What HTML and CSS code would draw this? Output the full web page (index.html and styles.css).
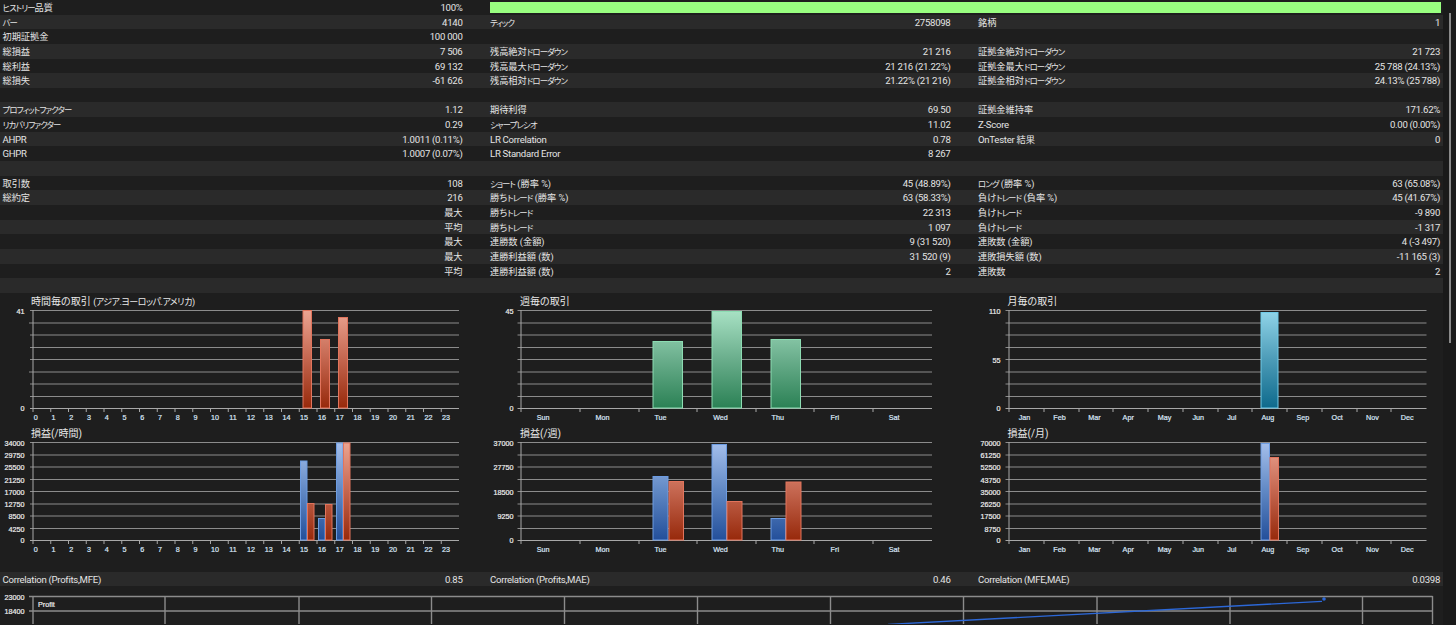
FILE: index.html
```html
<!DOCTYPE html>
<html lang="ja">
<head>
<meta charset="utf-8">
<title>バックテストレポート</title>
<link rel="stylesheet" href="styles.css">
</head>
<body>
<svg class="defs" width="0" height="0" aria-hidden="true">
  <defs>
    <linearGradient id="redA" gradientUnits="userSpaceOnUse" x1="0" y1="310" x2="0" y2="408"><stop offset="0" stop-color="#eca592"/><stop offset="0.5" stop-color="#c4664f"/><stop offset="1" stop-color="#97290b"/></linearGradient>
    <linearGradient id="redB" gradientUnits="userSpaceOnUse" x1="0" y1="442" x2="0" y2="540"><stop offset="0" stop-color="#eca592"/><stop offset="0.5" stop-color="#c4664f"/><stop offset="1" stop-color="#97290b"/></linearGradient>
    <linearGradient id="blueB" gradientUnits="userSpaceOnUse" x1="0" y1="442" x2="0" y2="540"><stop offset="0" stop-color="#a6c0ec"/><stop offset="0.5" stop-color="#6088c4"/><stop offset="1" stop-color="#234f9a"/></linearGradient>
    <linearGradient id="greenA" gradientUnits="userSpaceOnUse" x1="0" y1="310" x2="0" y2="408"><stop offset="0" stop-color="#a9e2c5"/><stop offset="0.5" stop-color="#6aae8c"/><stop offset="1" stop-color="#2b8155"/></linearGradient>
    <linearGradient id="cyanA" gradientUnits="userSpaceOnUse" x1="0" y1="310" x2="0" y2="408"><stop offset="0" stop-color="#93d6ea"/><stop offset="0.5" stop-color="#4d9cb8"/><stop offset="1" stop-color="#0e6a8c"/></linearGradient>
  </defs>
</svg>
<div class="page">
  <main class="content">
    <section class="stats">
      <div class="row"><div class="cell"><span class="ja"><i class="k">ヒストリー</i>品質</span><span>100%</span></div><div class="barcell"><div class="quality"></div></div></div>
      <div class="row"><div class="cell"><span class="ja"><i class="k">バー</i></span><span>4140</span></div><div class="cell"><span class="ja"><i class="k">ティック</i></span><span>2758098</span></div><div class="cell"><span class="ja">銘柄</span><span>1</span></div></div>
      <div class="row"><div class="cell"><span class="ja">初期証拠金</span><span>100 000</span></div></div>
      <div class="row"><div class="cell"><span class="ja">総損益</span><span>7 506</span></div><div class="cell"><span class="ja">残高絶対<i class="k">ドローダウン</i></span><span>21 216</span></div><div class="cell"><span class="ja">証拠金絶対<i class="k">ドローダウン</i></span><span>21 723</span></div></div>
      <div class="row"><div class="cell"><span class="ja">総利益</span><span>69 132</span></div><div class="cell"><span class="ja">残高最大<i class="k">ドローダウン</i></span><span>21 216 (21.22%)</span></div><div class="cell"><span class="ja">証拠金最大<i class="k">ドローダウン</i></span><span>25 788 (24.13%)</span></div></div>
      <div class="row"><div class="cell"><span class="ja">総損失</span><span>-61 626</span></div><div class="cell"><span class="ja">残高相対<i class="k">ドローダウン</i></span><span>21.22% (21 216)</span></div><div class="cell"><span class="ja">証拠金相対<i class="k">ドローダウン</i></span><span>24.13% (25 788)</span></div></div>
      <div class="row"></div>
      <div class="row"><div class="cell"><span class="ja"><i class="k">プロフィットファクター</i></span><span>1.12</span></div><div class="cell"><span class="ja">期待利得</span><span>69.50</span></div><div class="cell"><span class="ja">証拠金維持率</span><span>171.62%</span></div></div>
      <div class="row"><div class="cell"><span class="ja"><i class="k">リカバリファクター</i></span><span>0.29</span></div><div class="cell"><span class="ja"><i class="k">シャープレシオ</i></span><span>11.02</span></div><div class="cell"><span>Z-Score</span><span>0.00 (0.00%)</span></div></div>
      <div class="row"><div class="cell"><span>AHPR</span><span>1.0011 (0.11%)</span></div><div class="cell"><span>LR Correlation</span><span>0.78</span></div><div class="cell"><span>OnTester <span class="ja">結果</span></span><span>0</span></div></div>
      <div class="row"><div class="cell"><span>GHPR</span><span>1.0007 (0.07%)</span></div><div class="cell"><span>LR Standard Error</span><span>8 267</span></div></div>
      <div class="row"></div>
      <div class="row"><div class="cell"><span class="ja">取引数</span><span>108</span></div><div class="cell"><span class="ja"><i class="k">ショート</i> (勝率 %)</span><span>45 (48.89%)</span></div><div class="cell"><span class="ja"><i class="k">ロング</i> (勝率 %)</span><span>63 (65.08%)</span></div></div>
      <div class="row"><div class="cell"><span class="ja">総約定</span><span>216</span></div><div class="cell"><span class="ja">勝ち<i class="k">トレード</i> (勝率 %)</span><span>63 (58.33%)</span></div><div class="cell"><span class="ja">負け<i class="k">トレード</i> (負率 %)</span><span>45 (41.67%)</span></div></div>
      <div class="row"><div class="cell"><span></span><span class="ja">最大</span></div><div class="cell"><span class="ja">勝ち<i class="k">トレード</i></span><span>22 313</span></div><div class="cell"><span class="ja">負け<i class="k">トレード</i></span><span>-9 890</span></div></div>
      <div class="row"><div class="cell"><span></span><span class="ja">平均</span></div><div class="cell"><span class="ja">勝ち<i class="k">トレード</i></span><span>1 097</span></div><div class="cell"><span class="ja">負け<i class="k">トレード</i></span><span>-1 317</span></div></div>
      <div class="row"><div class="cell"><span></span><span class="ja">最大</span></div><div class="cell"><span class="ja">連勝数 (金額)</span><span>9 (31 520)</span></div><div class="cell"><span class="ja">連敗数 (金額)</span><span>4 (-3 497)</span></div></div>
      <div class="row"><div class="cell"><span></span><span class="ja">最大</span></div><div class="cell"><span class="ja">連勝利益額 (数)</span><span>31 520 (9)</span></div><div class="cell"><span class="ja">連敗損失額 (数)</span><span>-11 165 (3)</span></div></div>
      <div class="row"><div class="cell"><span></span><span class="ja">平均</span></div><div class="cell"><span class="ja">連勝利益額 (数)</span><span>2</span></div><div class="cell"><span class="ja">連敗数</span><span>2</span></div></div>
      <div class="row"></div>
    </section>

    <section class="charts">
      <svg class="chart" viewBox="0 293 487.5 132" width="487.5" height="132">
        <text class="title" x="31" y="305">時間毎の取引 <tspan class="tk">(アジア.ヨーロッパ.アメリカ)</tspan></text>
        <path class="grid" d="M30 310.5H459M29 323H459M30 335H459M30 347.5H459M30 359.5H459M29 372H459M30 384H459M30 396.5H459"/>
        <path class="axis" d="M33 310V412M30 408.5H459M50.75 408V412M68.5 408V412M86.25 408V412M104 408V412M121.75 408V412M139.5 408V412M157.25 408V412M175 408V412M192.75 408V412M210.5 408V412M228.25 408V412M246 408V412M263.75 408V412M281.5 408V412M299.25 408V412M317 408V412M334.75 408V412M352.5 408V412M370.25 408V412M388 408V412M405.75 408V412M423.5 408V412M441.25 408V412"/>
        <text class="ylab" x="24.5" y="313.5">41</text><text class="ylab" x="24.5" y="411">0</text>
        <text class="xlab" x="35.7" y="420">0</text><text class="xlab" x="53.5" y="420">1</text><text class="xlab" x="71.2" y="420">2</text><text class="xlab" x="89" y="420">3</text><text class="xlab" x="106.7" y="420">4</text><text class="xlab" x="124.5" y="420">5</text><text class="xlab" x="142.3" y="420">6</text><text class="xlab" x="160" y="420">7</text><text class="xlab" x="177.8" y="420">8</text><text class="xlab" x="195.5" y="420">9</text><text class="xlab" x="215" y="420">10</text><text class="xlab" x="233" y="420">11</text><text class="xlab" x="251" y="420">12</text><text class="xlab" x="268.7" y="420">13</text><text class="xlab" x="286.5" y="420">14</text><text class="xlab" x="304" y="420">15</text><text class="xlab" x="322" y="420">16</text><text class="xlab" x="339.7" y="420">17</text><text class="xlab" x="357.5" y="420">18</text><text class="xlab" x="375.3" y="420">19</text><text class="xlab" x="393" y="420">20</text><text class="xlab" x="410.7" y="420">21</text><text class="xlab" x="428.5" y="420">22</text><text class="xlab" x="446" y="420">23</text>
        <rect class="bar redA" x="303" y="310.5" width="8.5" height="97.5"/><rect class="bar redA" x="320.5" y="339.5" width="9" height="68.5"/><rect class="bar redA" x="338.5" y="317.5" width="9" height="90.5"/>
      </svg>
      <svg class="chart" viewBox="487.5 293 488 132" width="488" height="132">
        <text class="title" x="519.5" y="305">週毎の取引</text>
        <path class="grid" d="M517 310.5H931.5M517 323H931.5M517 335H931.5M517 347.5H931.5M517 359.5H931.5M517 372H931.5M517 384H931.5M517 396.5H931.5"/>
        <path class="axis" d="M520.5 310V412M517 408.5H931.5M579.5 408V412M638.5 408V412M696.5 408V412M755.5 408V412M813.5 408V412M872.5 408V412"/>
        <text class="ylab" x="513" y="313.5">45</text><text class="ylab" x="513" y="411">0</text>
        <text class="xlab" x="542.7" y="420">Sun</text><text class="xlab" x="602" y="420">Mon</text><text class="xlab" x="660" y="420">Tue</text><text class="xlab" x="720" y="420">Wed</text><text class="xlab" x="777.3" y="420">Thu</text><text class="xlab" x="834.3" y="420">Fri</text><text class="xlab" x="893.7" y="420">Sat</text>
        <rect class="bar greenA" x="652.5" y="341.5" width="29.5" height="66.5"/><rect class="bar greenA" x="711.5" y="311.5" width="29.5" height="96.5"/><rect class="bar greenA" x="770.5" y="339.5" width="29.5" height="68.5"/>
      </svg>
      <svg class="chart" viewBox="975.5 293 467.5 132" width="467.5" height="132">
        <text class="title" x="1007" y="305">月毎の取引</text>
        <path class="grid" d="M1005 310.5H1426M1005 323H1426M1005 335H1426M1005 347.5H1426M1005 359.5H1426M1005 372H1426M1005 384H1426M1005 396.5H1426"/>
        <path class="axis" d="M1008.5 310V412M1005 408.5H1426M1043.5 408V412M1078.5 408V412M1112.5 408V412M1147.5 408V412M1182.5 408V412M1217.5 408V412M1251.5 408V412M1286.5 408V412M1321.5 408V412M1356.5 408V412M1390.5 408V412"/>
        <text class="ylab" x="1000" y="313.5">110</text><text class="ylab" x="1000" y="362.5">55</text><text class="ylab" x="1000" y="411">0</text>
        <text class="xlab" x="1024" y="420">Jan</text><text class="xlab" x="1059" y="420">Feb</text><text class="xlab" x="1094" y="420">Mar</text><text class="xlab" x="1127.7" y="420">Apr</text><text class="xlab" x="1164" y="420">May</text><text class="xlab" x="1197.7" y="420">Jun</text><text class="xlab" x="1231.3" y="420">Jul</text><text class="xlab" x="1267.3" y="420">Aug</text><text class="xlab" x="1302.3" y="420">Sep</text><text class="xlab" x="1336.7" y="420">Oct</text><text class="xlab" x="1372" y="420">Nov</text><text class="xlab" x="1406.7" y="420">Dec</text>
        <rect class="bar cyanA" x="1260.5" y="312.5" width="17" height="95.5"/>
      </svg>

      <svg class="chart" viewBox="0 425 487.5 147" width="487.5" height="147">
        <text class="title" x="31" y="437">損益(/時間)</text>
        <path class="grid" d="M30 442.5H459M30 455H459M30 467H459M30 479.5H459M30 491.5H459M30 504H459M30 516H459M30 528.5H459"/>
        <path class="axis" d="M33 442V544M30 540.5H459M50.75 540V544M68.5 540V544M86.25 540V544M104 540V544M121.75 540V544M139.5 540V544M157.25 540V544M175 540V544M192.75 540V544M210.5 540V544M228.25 540V544M246 540V544M263.75 540V544M281.5 540V544M299.25 540V544M317 540V544M334.75 540V544M352.5 540V544M370.25 540V544M388 540V544M405.75 540V544M423.5 540V544M441.25 540V544"/>
        <text class="ylab" x="24.5" y="445.5">34000</text><text class="ylab" x="24.5" y="458">29750</text><text class="ylab" x="24.5" y="470">25500</text><text class="ylab" x="24.5" y="482.5">21250</text><text class="ylab" x="24.5" y="494.5">17000</text><text class="ylab" x="24.5" y="507">12750</text><text class="ylab" x="24.5" y="519">8500</text><text class="ylab" x="24.5" y="531.5">4250</text><text class="ylab" x="24.5" y="543">0</text>
        <text class="xlab" x="35.7" y="552">0</text><text class="xlab" x="53.5" y="552">1</text><text class="xlab" x="71.2" y="552">2</text><text class="xlab" x="89" y="552">3</text><text class="xlab" x="106.7" y="552">4</text><text class="xlab" x="124.5" y="552">5</text><text class="xlab" x="142.3" y="552">6</text><text class="xlab" x="160" y="552">7</text><text class="xlab" x="177.8" y="552">8</text><text class="xlab" x="195.5" y="552">9</text><text class="xlab" x="215" y="552">10</text><text class="xlab" x="233" y="552">11</text><text class="xlab" x="251" y="552">12</text><text class="xlab" x="268.7" y="552">13</text><text class="xlab" x="286.5" y="552">14</text><text class="xlab" x="304" y="552">15</text><text class="xlab" x="322" y="552">16</text><text class="xlab" x="339.7" y="552">17</text><text class="xlab" x="357.5" y="552">18</text><text class="xlab" x="375.3" y="552">19</text><text class="xlab" x="393" y="552">20</text><text class="xlab" x="410.7" y="552">21</text><text class="xlab" x="428.5" y="552">22</text><text class="xlab" x="446" y="552">23</text>
        <rect class="bar blueB" x="300.5" y="461" width="6.5" height="79"/><rect class="bar redB" x="307.5" y="503.5" width="6.5" height="36.5"/><rect class="bar blueB" x="318.5" y="518.5" width="6.5" height="21.5"/><rect class="bar redB" x="325.5" y="504.5" width="6.5" height="35.5"/><rect class="bar blueB" x="336.5" y="443" width="6.5" height="97"/><rect class="bar redB" x="343.5" y="443" width="6.5" height="97"/>
      </svg>
      <svg class="chart" viewBox="487.5 425 488 147" width="488" height="147">
        <text class="title" x="519.5" y="437">損益(/週)</text>
        <path class="grid" d="M517 442.5H931.5M517 455H931.5M517 467H931.5M517 479.5H931.5M517 491.5H931.5M517 504H931.5M517 516H931.5M517 528.5H931.5"/>
        <path class="axis" d="M520.5 442V544M517 540.5H931.5M579.5 540V544M638.5 540V544M696.5 540V544M755.5 540V544M813.5 540V544M872.5 540V544"/>
        <text class="ylab" x="513" y="445.5">37000</text><text class="ylab" x="513" y="470">27750</text><text class="ylab" x="513" y="494.5">18500</text><text class="ylab" x="513" y="519">9250</text><text class="ylab" x="513" y="543">0</text>
        <text class="xlab" x="542.7" y="552">Sun</text><text class="xlab" x="602" y="552">Mon</text><text class="xlab" x="660" y="552">Tue</text><text class="xlab" x="720" y="552">Wed</text><text class="xlab" x="777.3" y="552">Thu</text><text class="xlab" x="834.3" y="552">Fri</text><text class="xlab" x="893.7" y="552">Sat</text>
        <rect class="bar blueB" x="652.5" y="476.5" width="15" height="63.5"/><rect class="bar redB" x="668.5" y="481.5" width="14.5" height="58.5"/><rect class="bar blueB" x="711.5" y="444.5" width="14.5" height="95.5"/><rect class="bar redB" x="726.5" y="501.5" width="15" height="38.5"/><rect class="bar blueB" x="770.5" y="518.5" width="14.5" height="21.5"/><rect class="bar redB" x="785.5" y="482" width="15" height="58"/>
      </svg>
      <svg class="chart" viewBox="975.5 425 467.5 147" width="467.5" height="147">
        <text class="title" x="1007" y="437">損益(/月)</text>
        <path class="grid" d="M1005 442.5H1426M1005 455H1426M1005 467H1426M1005 479.5H1426M1005 491.5H1426M1005 504H1426M1005 516H1426M1005 528.5H1426"/>
        <path class="axis" d="M1008.5 442V544M1005 540.5H1426M1043.5 540V544M1078.5 540V544M1112.5 540V544M1147.5 540V544M1182.5 540V544M1217.5 540V544M1251.5 540V544M1286.5 540V544M1321.5 540V544M1356.5 540V544M1390.5 540V544"/>
        <text class="ylab" x="1000" y="445.5">70000</text><text class="ylab" x="1000" y="458">61250</text><text class="ylab" x="1000" y="470">52500</text><text class="ylab" x="1000" y="482.5">43750</text><text class="ylab" x="1000" y="494.5">35000</text><text class="ylab" x="1000" y="507">26250</text><text class="ylab" x="1000" y="519">17500</text><text class="ylab" x="1000" y="531.5">8750</text><text class="ylab" x="1000" y="543">0</text>
        <text class="xlab" x="1024" y="552">Jan</text><text class="xlab" x="1059" y="552">Feb</text><text class="xlab" x="1094" y="552">Mar</text><text class="xlab" x="1127.7" y="552">Apr</text><text class="xlab" x="1164" y="552">May</text><text class="xlab" x="1197.7" y="552">Jun</text><text class="xlab" x="1231.3" y="552">Jul</text><text class="xlab" x="1267.3" y="552">Aug</text><text class="xlab" x="1302.3" y="552">Sep</text><text class="xlab" x="1336.7" y="552">Oct</text><text class="xlab" x="1372" y="552">Nov</text><text class="xlab" x="1406.7" y="552">Dec</text>
        <rect class="bar blueB" x="1260.5" y="443.5" width="8.5" height="96.5"/><rect class="bar redB" x="1269.5" y="457.5" width="8.5" height="82.5"/>
      </svg>
    </section>

    <div class="row corr"><div class="cell"><span>Correlation (Profits,MFE)</span><span>0.85</span></div><div class="cell"><span>Correlation (Profits,MAE)</span><span>0.46</span></div><div class="cell"><span>Correlation (MFE,MAE)</span><span>0.0398</span></div></div>

    <svg class="chart" viewBox="0 587 1443 38" width="1443" height="38">
      <path class="grid wide" d="M29 597.5H1432.5M29 612H1432.5M33 597V625M165 597V625M299 597V625M431.5 597V625M564.5 597V625M697.5 597V625M830.5 597V625M963.5 597V625M1097 597V625M1230 597V625M1362.5 597V625M1432.5 597V625"/>
      <text class="ylab" x="24.5" y="600.5">23000</text><text class="ylab" x="24.5" y="615">18400</text><text class="ylab" x="24.5" y="629.5">13800</text>
      <text class="plabel" x="38" y="607.5">Profit</text>
      <path class="curve" d="M888 625.4L1322 602.4"/>
      <circle class="dot" cx="1324" cy="600" r="1.8"/>
    </svg>
  </main>
  <aside class="track"><div class="thumb"></div></aside>
</div>
</body>
</html>
```
FILE: styles.css
```css
html, body {
  margin: 0;
  padding: 0;
  height: 625px;
  overflow: hidden;
  background: #1a1a1a;
}
.defs {
  position: absolute;
}
.page {
  display: flex;
  height: 625px;
  overflow: hidden;
  font-family: Roboto, "Noto Sans CJK JP", sans-serif;
  font-size: 9.6px;
  letter-spacing: -0.28px;
  font-feature-settings: "palt";
  color: #e4e4e4;
}
.content {
  width: 1443px;
  flex: none;
  background: #1e1e1e;
}
.row {
  display: grid;
  grid-template-columns: 487.5px 488px 467.5px;
  height: 14.65px;
  line-height: 15px;
  background: #1e1e1e;
}
.row:nth-child(even) {
  background: #2a2a2a;
}
.cell {
  display: flex;
  justify-content: space-between;
  padding: 0 25px 0 2.5px;
  white-space: nowrap;
}
.cell:nth-child(3) {
  padding-right: 3px;
}
.ja {
  font-size: 9.2px;
  letter-spacing: 0;
}
.k {
  font-style: normal;
  font-size: 8.4px;
  letter-spacing: -0.9px;
}
.barcell {
  grid-column: 2 / 4;
  padding: 2px 2px 2px 2.5px;
}
.quality {
  height: 10.65px;
  background: #99ff80;
}
.charts {
  display: grid;
  grid-template-columns: 487.5px 488px 467.5px;
  grid-template-rows: 132px 147px;
}
.chart {
  display: block;
}
.row.corr {
  background: #2a2a2a;
}
.title {
  font-size: 10px;
  letter-spacing: 0;
  fill: #e8e8e8;
}
.tk {
  font-size: 9px;
  letter-spacing: -0.5px;
}
.ylab, .xlab, .plabel {
  font-family: "Liberation Sans", sans-serif;
  font-size: 7.2px;
  letter-spacing: 0;
  stroke-width: 0.2px;
}
.ylab {
  fill: #eeeeee;
  stroke: #eeeeee;
  text-anchor: end;
}
.xlab {
  fill: #dbe7f8;
  stroke: #dbe7f8;
  text-anchor: middle;
}
.plabel {
  fill: #eeeeee;
  stroke: #eeeeee;
}
.grid {
  fill: none;
  stroke: #8c8c8c;
  stroke-width: 1.1;
}
.grid.wide {
  stroke-width: 1.4;
}
.axis {
  fill: none;
  stroke: #a8a8a8;
  stroke-width: 1;
}
.bar {
  stroke-width: 1;
}
.redA { fill: url(#redA); stroke: #e2745c; }
.redB { fill: url(#redB); stroke: #e2745c; }
.blueB { fill: url(#blueB); stroke: #6c9ce2; }
.greenA { fill: url(#greenA); stroke: #8cdcb2; }
.cyanA { fill: url(#cyanA); stroke: #70cbe8; }
.curve {
  fill: none;
  stroke: #2c68d8;
  stroke-width: 1.4;
}
.dot {
  fill: #2c68d8;
}
.track {
  flex: 1;
  padding: 13px 5px 0 5.5px;
}
.thumb {
  width: 2.5px;
  height: 330px;
  background: #8a8a8a;
}
```
